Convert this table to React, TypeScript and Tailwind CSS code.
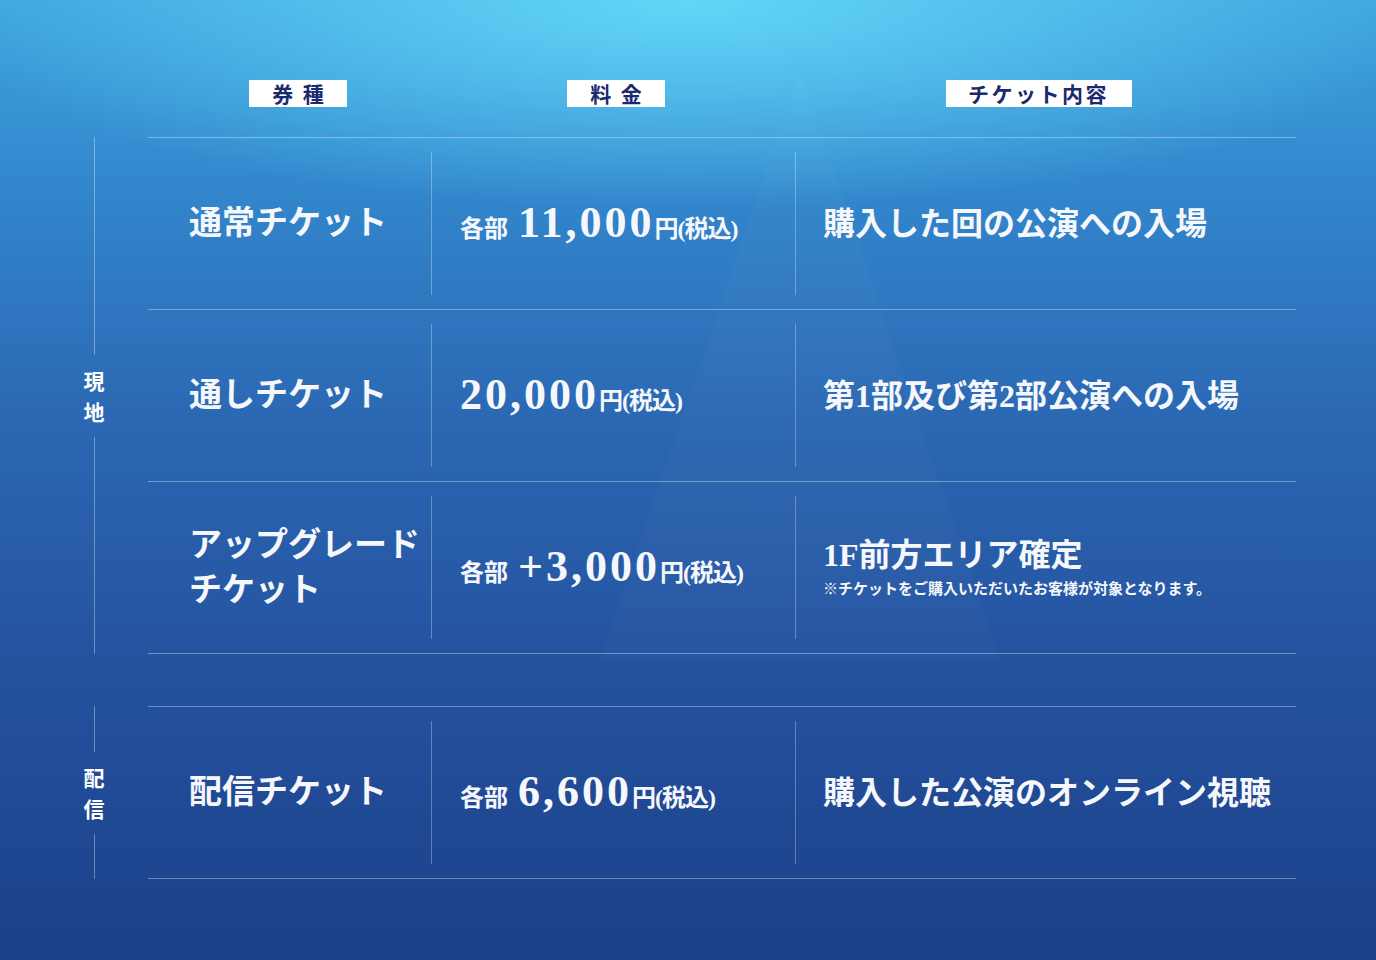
import React from "react";

const serif = "font-['Liberation_Serif','Noto_Sans_CJK_JP',serif]";
const sans = "font-['Noto_Sans_CJK_JP','Noto_Sans',sans-serif]";

function Price(props: { prefix?: string; amount: string }) {
  const { prefix, amount } = props;
  return (
    <div className={`flex items-baseline text-[#f5f7fb] ${serif}`}>
      {prefix && <span className="text-[24px] font-semibold mr-[10px]">{prefix}</span>}
      <span className="text-[44px] leading-none tracking-[3px] font-bold">{amount}</span>
      <span className="text-[24px] font-semibold tracking-[-1px]">円(税込)</span>
    </div>
  );
}

function Row(props: { name: React.ReactNode; price: React.ReactNode; detail: React.ReactNode }) {
  const { name, price, detail } = props;
  return (
    <div className="h-[172px] flex border-b border-white/35 py-[14px]">
      <div className={`w-[283px] flex items-center pl-[41px] text-[33px] leading-[45px] font-semibold text-[#f5f7fb] ${serif}`}>
        {name}
      </div>
      <div className="w-[364px] flex items-center pl-[28px] border-l border-white/30">{price}</div>
      <div className="flex-1 flex items-center pl-[27px] border-l border-white/30">{detail}</div>
    </div>
  );
}

function SideLabel(props: { text: string }) {
  return (
    <div className="w-[148px] pl-[40px] flex flex-col items-center">
      <div className="flex-1 w-px bg-white/35" />
      <div className={`shrink-0 py-[10px] flex flex-col items-center text-[21px] leading-[31px] font-bold text-white ${sans}`}>
        {props.text.split("").map((c) => (
          <div key={c}>{c}</div>
        ))}
      </div>
      <div className="flex-1 w-px bg-white/35" />
    </div>
  );
}

function Detail(props: { text: string; note?: string }) {
  return (
    <div className={`text-[#f5f7fb] ${serif}`}>
      <div className="text-[32px] leading-[40px] font-semibold">{props.text}</div>
      {props.note && <div className="text-[15px] leading-[24px] font-semibold mt-[2px]">{props.note}</div>}
    </div>
  );
}

export default function App() {
  return (
    <div className="relative w-[1376px] h-[960px] overflow-hidden bg-[radial-gradient(ellipse_55%_22%_at_50%_0%,#62d6f8_0%,rgba(80,190,240,0)_100%),linear-gradient(to_bottom,#3ea4de_0%,#3286cc_20%,#2b66b2_45%,#24529f_70%,#1c4089_100%)]">
      <svg className="absolute inset-0 pointer-events-none" width="1376" height="960">
        <polygon points="800,70 600,660 1000,660" fill="white" opacity="0.018" />
      </svg>

      <div className="relative pt-[80px]">
        <div className="flex">
          <div className="w-[148px]" />
          <div className="w-[283px] flex justify-center pl-[17px]">
            <span className={`bg-white text-[#1a2a6e] text-[21px] leading-[27px] font-bold w-[98px] text-center tracking-[0.45em] pl-[0.45em] ${sans}`}>券種</span>
          </div>
          <div className="w-[364px] flex justify-center pl-[6px]">
            <span className={`bg-white text-[#1a2a6e] text-[21px] leading-[27px] font-bold w-[98px] text-center tracking-[0.45em] pl-[0.45em] ${sans}`}>料金</span>
          </div>
          <div className="w-[501px] flex justify-center pr-[14px]">
            <span className={`bg-white text-[#1a2a6e] text-[21px] leading-[27px] font-bold w-[186px] text-center tracking-[0.12em] ${sans}`}>チケット内容</span>
          </div>
        </div>

        <div className="flex mt-[30px]">
          <SideLabel text="現地" />
          <div className="w-[1148px] border-t border-white/35">
            <Row
              name="通常チケット"
              price={<Price prefix="各部" amount="11,000" />}
              detail={<Detail text="購入した回の公演への入場" />}
            />
            <Row
              name="通しチケット"
              price={<Price amount="20,000" />}
              detail={<Detail text="第1部及び第2部公演への入場" />}
            />
            <Row
              name={
                <span>
                  アップグレード
                  <br />
                  チケット
                </span>
              }
              price={<Price prefix="各部" amount="+3,000" />}
              detail={<Detail text="1F前方エリア確定" note="※チケットをご購入いただいたお客様が対象となります。" />}
            />
          </div>
        </div>

        <div className="flex mt-[52px]">
          <SideLabel text="配信" />
          <div className="w-[1148px] border-t border-white/35">
            <Row
              name="配信チケット"
              price={<Price prefix="各部" amount="6,600" />}
              detail={<Detail text="購入した公演のオンライン視聴" />}
            />
          </div>
        </div>
      </div>
    </div>
  );
}
